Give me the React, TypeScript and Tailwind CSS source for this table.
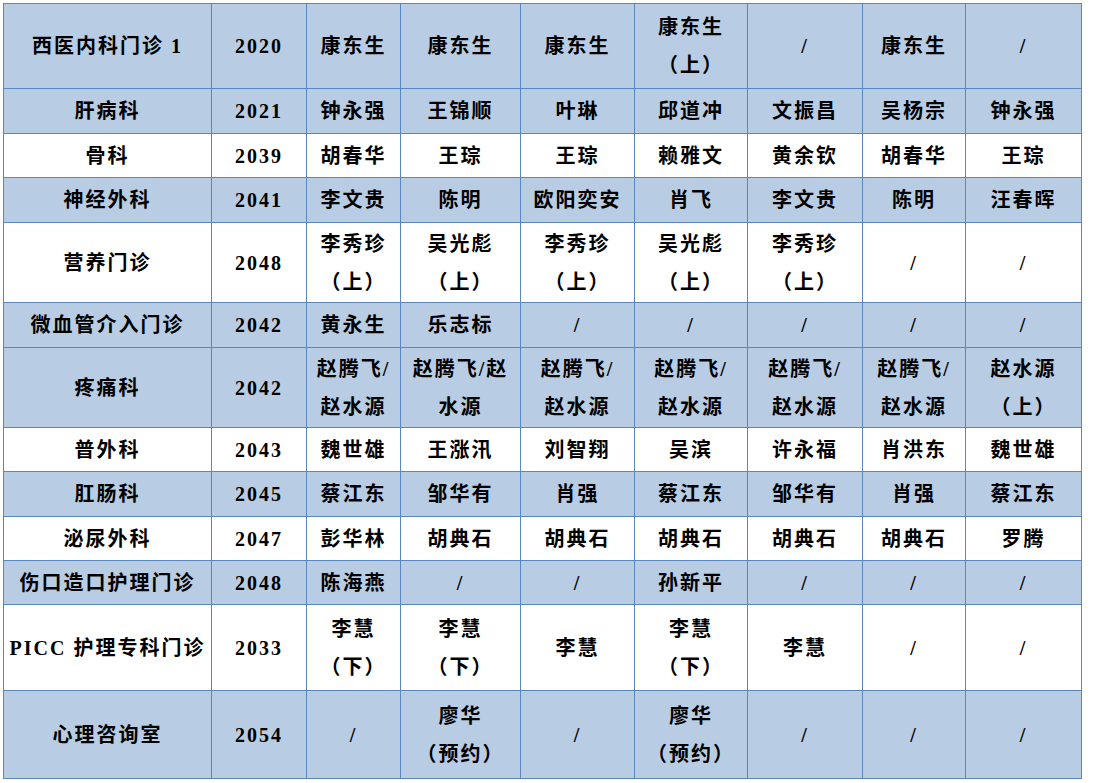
import React from "react";

type Row = { cells: string[]; blue: boolean; h: string };

const rows: Row[] = [
  { cells: ["西医内科门诊 1", "2020", "康东生", "康东生", "康东生", "康东生\n（上）", "/", "康东生", "/"], blue: true, h: "h-[85px]" },
  { cells: ["肝病科", "2021", "钟永强", "王锦顺", "叶琳", "邱道冲", "文振昌", "吴杨宗", "钟永强"], blue: true, h: "h-[45px]" },
  { cells: ["骨科", "2039", "胡春华", "王琮", "王琮", "赖雅文", "黄余钦", "胡春华", "王琮"], blue: false, h: "h-[44px]" },
  { cells: ["神经外科", "2041", "李文贵", "陈明", "欧阳奕安", "肖飞", "李文贵", "陈明", "汪春晖"], blue: true, h: "h-[45px]" },
  { cells: ["营养门诊", "2048", "李秀珍\n（上）", "吴光彪\n（上）", "李秀珍\n（上）", "吴光彪\n（上）", "李秀珍\n（上）", "/", "/"], blue: false, h: "h-[80px]" },
  { cells: ["微血管介入门诊", "2042", "黄永生", "乐志标", "/", "/", "/", "/", "/"], blue: true, h: "h-[45px]" },
  { cells: ["疼痛科", "2042", "赵腾飞/\n赵水源", "赵腾飞/赵\n水源", "赵腾飞/\n赵水源", "赵腾飞/\n赵水源", "赵腾飞/\n赵水源", "赵腾飞/\n赵水源", "赵水源\n（上）"], blue: true, h: "h-[80px]" },
  { cells: ["普外科", "2043", "魏世雄", "王涨汛", "刘智翔", "吴滨", "许永福", "肖洪东", "魏世雄"], blue: false, h: "h-[44px]" },
  { cells: ["肛肠科", "2045", "蔡江东", "邹华有", "肖强", "蔡江东", "邹华有", "肖强", "蔡江东"], blue: true, h: "h-[45px]" },
  { cells: ["泌尿外科", "2047", "彭华林", "胡典石", "胡典石", "胡典石", "胡典石", "胡典石", "罗腾"], blue: false, h: "h-[44px]" },
  { cells: ["伤口造口护理门诊", "2048", "陈海燕", "/", "/", "孙新平", "/", "/", "/"], blue: true, h: "h-[44px]" },
  { cells: ["PICC 护理专科门诊", "2033", "李慧\n（下）", "李慧\n（下）", "李慧", "李慧\n（下）", "李慧", "/", "/"], blue: false, h: "h-[86px]" },
  { cells: ["心理咨询室", "2054", "/", "廖华\n（预约）", "/", "廖华\n（预约）", "/", "/", "/"], blue: true, h: "h-[88px]" },
];

const widths = ["w-[208px]", "w-[95px]", "w-[94px]", "w-[120px]", "w-[114px]", "w-[113px]", "w-[115px]", "w-[103px]", "w-[116px]"];

export default function App() {
  return (
    <div className="min-h-screen bg-white pl-[3px] pt-[3px]">
      <table
        className="table-fixed border-collapse w-[1079px] text-black font-bold text-[20px] tracking-[2px]"
        style={{ fontFamily: '"Liberation Serif", "Noto Sans CJK SC", serif' }}
      >
        <colgroup>
          {widths.map((w, i) => (
            <col key={i} className={w} />
          ))}
        </colgroup>
        <tbody>
          {rows.map((r, ri) => (
            <tr key={ri} className={`${r.h} ${r.blue ? "bg-[#b8cce4]" : "bg-white"}`}>
              {r.cells.map((c, ci) => (
                <td key={ci} className="border border-[#5b87c1] p-0 text-center align-middle leading-[38px] whitespace-pre-line">
                  {c}
                </td>
              ))}
            </tr>
          ))}
        </tbody>
      </table>
    </div>
  );
}
